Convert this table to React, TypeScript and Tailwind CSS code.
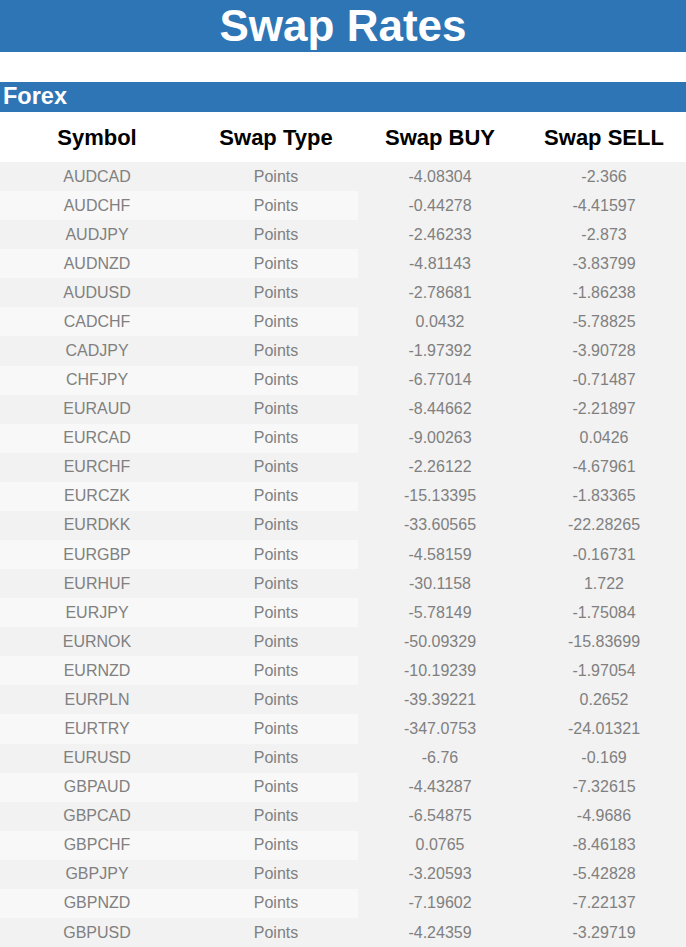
import React from "react";

const rows: [string, string, string][] = [
  ["AUDCAD", "-4.08304", "-2.366"],
  ["AUDCHF", "-0.44278", "-4.41597"],
  ["AUDJPY", "-2.46233", "-2.873"],
  ["AUDNZD", "-4.81143", "-3.83799"],
  ["AUDUSD", "-2.78681", "-1.86238"],
  ["CADCHF", "0.0432", "-5.78825"],
  ["CADJPY", "-1.97392", "-3.90728"],
  ["CHFJPY", "-6.77014", "-0.71487"],
  ["EURAUD", "-8.44662", "-2.21897"],
  ["EURCAD", "-9.00263", "0.0426"],
  ["EURCHF", "-2.26122", "-4.67961"],
  ["EURCZK", "-15.13395", "-1.83365"],
  ["EURDKK", "-33.60565", "-22.28265"],
  ["EURGBP", "-4.58159", "-0.16731"],
  ["EURHUF", "-30.1158", "1.722"],
  ["EURJPY", "-5.78149", "-1.75084"],
  ["EURNOK", "-50.09329", "-15.83699"],
  ["EURNZD", "-10.19239", "-1.97054"],
  ["EURPLN", "-39.39221", "0.2652"],
  ["EURTRY", "-347.0753", "-24.01321"],
  ["EURUSD", "-6.76", "-0.169"],
  ["GBPAUD", "-4.43287", "-7.32615"],
  ["GBPCAD", "-6.54875", "-4.9686"],
  ["GBPCHF", "0.0765", "-8.46183"],
  ["GBPJPY", "-3.20593", "-5.42828"],
  ["GBPNZD", "-7.19602", "-7.22137"],
  ["GBPUSD", "-4.24359", "-3.29719"],
];

export default function App() {
  return (
    <div
      className="w-[686px] h-[947px] bg-white overflow-hidden"
      style={{ fontFamily: '"Liberation Sans", Arial, sans-serif' }}
    >
      <div className="h-[52px] bg-[#2e75b6] flex items-center justify-center">
        <span className="text-white font-bold text-[44px] leading-none">Swap Rates</span>
      </div>
      <div className="h-[30px]" />
      <div className="h-[30px] bg-[#2e75b6] flex items-center pl-[3px]">
        <span className="text-white font-bold text-[23.5px] leading-none">Forex</span>
      </div>
      <div className="h-[50px] grid grid-cols-[194px_164px_164px_164px] items-center text-black font-bold text-[22px]">
        <div className="text-center">Symbol</div>
        <div className="text-center">Swap Type</div>
        <div className="text-center">Swap BUY</div>
        <div className="text-center">Swap SELL</div>
      </div>
      <div className="flex flex-col">
        {rows.map(([sym, buy, sell], i) => (
          <div
            key={sym}
            className="h-[29.08px] shrink-0 grid grid-cols-[194px_164px_164px_164px] items-center text-[16px] text-[#808080] bg-[#f2f2f2]"
          >
            <div className={"h-full flex items-center justify-center " + (i % 2 === 1 ? "bg-[#f8f8f8]" : "")}>{sym}</div>
            <div className={"h-full flex items-center justify-center " + (i % 2 === 1 ? "bg-[#f8f8f8]" : "")}>Points</div>
            <div className="h-full flex items-center justify-center">{buy}</div>
            <div className="h-full flex items-center justify-center">{sell}</div>
          </div>
        ))}
      </div>
    </div>
  );
}
